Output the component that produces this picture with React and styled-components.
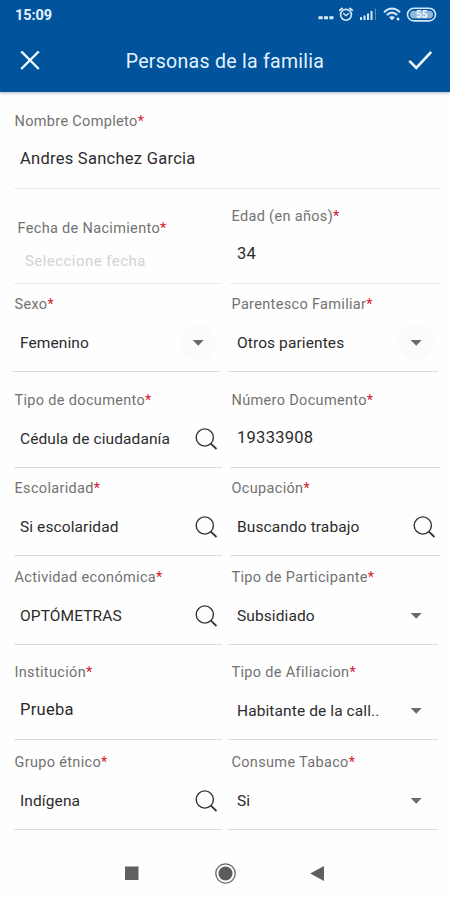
import React from 'react';
import styled, { createGlobalStyle } from 'styled-components';

const GlobalStyle = createGlobalStyle`
  * {
    box-sizing: border-box;
  }

  body {
    margin: 0;
    background-color: #fefefe;
    font-family: Roboto, 'Liberation Sans', sans-serif;
  }
`;

const Screen = styled.div`
  display: flex;
  flex-direction: column;
  width: 450px;
  height: 900px;
  overflow: hidden;
`;

const Header = styled.header`
  height: 92px;
  flex-shrink: 0;
  background-color: #01549c;
  color: #e4f3ff;
  box-shadow: 0 1px 3px rgba(0, 50, 100, 0.35);
`;

const StatusBar = styled.div`
  display: flex;
  align-items: center;
  justify-content: space-between;
  height: 30px;
  padding: 0 13px 0 15px;
`;

const Clock = styled.span`
  font-size: 14.5px;
  font-weight: 700;
  letter-spacing: -0.1px;
`;

const StatusIcons = styled.svg`
  display: block;
  width: 120px;
  height: 30px;
`;

const TitleBar = styled.div`
  display: grid;
  grid-template-columns: 60px 1fr 60px;
  align-items: center;
  height: 62px;
`;

const Title = styled.h1`
  margin: 0;
  text-align: center;
  font-size: 19.5px;
  font-weight: 400;
  letter-spacing: 0.28px;
  white-space: nowrap;
`;

const HeaderButton = styled.button`
  display: flex;
  align-items: center;
  justify-content: center;
  height: 62px;
  padding: 0;
  border: none;
  background: none;
`;

const Form = styled.form`
  padding: 1px 10px 0 14px;
`;

const Row = styled.div`
  display: grid;
  grid-template-columns: ${({ $wide }) => ($wide ? '1fr' : '208px 210px')};
  column-gap: 8px;
  height: ${({ $height }) => $height}px;
`;

const Field = styled.div`
  display: flex;
  flex-direction: column;
  justify-content: flex-end;
  min-width: 0;
  margin-left: ${({ $select }) => ($select ? '-2px' : '0')};
  margin-right: ${({ $select }) => ($select ? '2px' : '0')};
  padding-left: ${({ $select }) => ($select ? '2px' : '0')};
  border-bottom: 1px solid ${({ $faint }) => ($faint ? '#ececec' : '#dcdcdc')};

  & + & {
    text-indent: 1px;
  }
`;

const Label = styled.label`
  height: 20px;
  padding-left: ${({ $date }) => ($date ? '3.5px' : '0.5px')};
  color: #727272;
  font-size: 14.5px;
  line-height: 20px;
  letter-spacing: 0.33px;
  white-space: nowrap;
`;

const Required = styled.span`
  color: #d9182d;
`;

const ValueRow = styled.div`
  display: flex;
  align-items: center;
  justify-content: space-between;
  height: ${({ $type }) => ($type === 'date' ? '44px' : '56px')};
  padding-left: ${({ $type }) => ($type === 'date' ? '11px' : '6px')};
  padding-bottom: ${({ $type }) => ($type === 'input' ? '2px' : '0')};
`;

const Value = styled.span`
  color: #2c2c2c;
  font-size: 15.5px;
  line-height: 22px;
  letter-spacing: 0.1px;
  white-space: nowrap;
`;

const InputValue = styled(Value)`
  font-size: 16.5px;
  letter-spacing: 0.27px;
`;

const Placeholder = styled(Value)`
  color: #d2d2d2;
  font-size: 15px;
  letter-spacing: 0.45px;
`;

const SearchIcon = styled.svg`
  display: block;
  flex-shrink: 0;
  width: 24px;
  height: 24px;
  margin-right: 4px;
`;

const Arrow = styled.span`
  display: flex;
  align-items: center;
  justify-content: center;
  width: 36px;
  height: 36px;
  margin-right: 4px;
  border-radius: 50%;
  background-color: ${({ $halo }) => ($halo ? '#fbfbfb' : 'transparent')};
`;

const NavBar = styled.nav`
  display: flex;
  align-items: center;
  justify-content: center;
  gap: 70px;
  height: 48px;
  margin-top: 19px;

  svg {
    display: block;
    width: 24px;
    height: 24px;
  }
`;

const rows = [
  {
    height: 96,
    fields: [{ label: 'Nombre Completo', value: 'Andres Sanchez Garcia', faint: true }],
  },
  {
    height: 95,
    fields: [
      { label: 'Fecha de Nacimiento', value: 'Seleccione fecha', type: 'date', faint: true },
      { label: 'Edad (en años)', value: '34', faint: true },
    ],
  },
  {
    height: 88,
    fields: [
      { label: 'Sexo', value: 'Femenino', type: 'select', halo: true },
      { label: 'Parentesco Familiar', value: 'Otros parientes', type: 'select', halo: true },
    ],
  },
  {
    height: 96,
    fields: [
      { label: 'Tipo de documento', value: 'Cédula de ciudadanía', type: 'search' },
      { label: 'Número Documento', value: '19333908' },
    ],
  },
  {
    height: 88,
    fields: [
      { label: 'Escolaridad', value: 'Si escolaridad', type: 'search' },
      { label: 'Ocupación', value: 'Buscando trabajo', type: 'search' },
    ],
  },
  {
    height: 89,
    fields: [
      { label: 'Actividad económica', value: 'OPTÓMETRAS', type: 'search' },
      { label: 'Tipo de Participante', value: 'Subsidiado', type: 'select' },
    ],
  },
  {
    height: 95,
    fields: [
      { label: 'Institución', value: 'Prueba' },
      { label: 'Tipo de Afiliacion', value: 'Habitante de la call..', type: 'select' },
    ],
  },
  {
    height: 90,
    fields: [
      { label: 'Grupo étnico', value: 'Indígena', type: 'search' },
      { label: 'Consume Tabaco', value: 'Si', type: 'select' },
    ],
  },
];

const valueStyles = {
  input: InputValue,
  date: Placeholder,
  search: Value,
  select: Value,
};

const FormField = ({ label, value, type = 'input', faint, halo }) => {
  const Text = valueStyles[type];

  return (
    <Field $select={type === 'select'} $faint={faint}>
      <Label $date={type === 'date'}>
        {label}
        <Required>*</Required>
      </Label>
      <ValueRow $type={type}>
        <Text>{value}</Text>
        {type === 'search' && (
          <SearchIcon viewBox="0 0 24 24" fill="none" stroke="#333" strokeWidth="1.4">
            <circle cx="10.8" cy="10.5" r="8.6" />
            <path d="M16.8 16.6 L22.5 22" strokeWidth="1.8" />
          </SearchIcon>
        )}
        {type === 'select' && (
          <Arrow $halo={halo}>
            <svg width="12" height="6" viewBox="0 0 12 6">
              <path d="M0.7 0 H11.7 L6.2 5.7 Z" fill="#6b6b6b" />
            </svg>
          </Arrow>
        )}
      </ValueRow>
    </Field>
  );
};

const StatusGlyphs = () => (
  <StatusIcons viewBox="0 0 120 30" fill="none" stroke="#d3e8f8">
    {/* more notifications */}
    <path d="M1.5 17.8 H5.7 M7 17.8 H11 M12.3 17.8 H16.5" strokeWidth="3" />
    {/* alarm */}
    <circle cx="29" cy="14.8" r="5.4" strokeWidth="1.6" />
    <path d="M26.2 13.3 L29 15.6 L32 13.3" strokeWidth="1.4" />
    <path d="M22.3 10.7 L25.6 8 M35.7 10.7 L32.4 8" strokeWidth="1.8" />
    {/* signal */}
    <path d="M44 17 V20 M47.5 15.5 V20 M51 13.5 V20 M54.5 11 V20" strokeWidth="2" />
    <path d="M58.5 8.5 V20" strokeWidth="1" opacity="0.4" />
    {/* wifi */}
    <path d="M67 12.2 Q75 4.8 83 12.2" strokeWidth="2" />
    <path d="M69.8 15 Q75 10.2 80.2 15" strokeWidth="2" />
    <path d="M72.3 17.4 Q75 15 77.7 17.4 L75 20 Z" fill="#d3e8f8" strokeWidth="0.5" />
    <circle cx="81" cy="19" r="1.5" fill="#d3e8f8" stroke="none" />
    {/* battery */}
    <rect x="90.5" y="8.3" width="28" height="12.6" rx="6.3" strokeWidth="1.6" />
    <rect x="93" y="10.7" width="23" height="7.8" rx="3.9" fill="#8fb9dc" stroke="none" />
    <text x="104.7" y="18.3" textAnchor="middle" fontSize="10" fontWeight="700" fill="#f4fbff" stroke="none">
      55
    </text>
  </StatusIcons>
);

const App = () => (
  <Screen>
    <GlobalStyle />
    <Header>
      <StatusBar>
        <Clock>15:09</Clock>
        <StatusGlyphs />
      </StatusBar>
      <TitleBar>
        <HeaderButton type="button" aria-label="Cerrar">
          <svg width="20" height="20" viewBox="0 0 20 20" stroke="#f0f9ff" strokeWidth="2.4">
            <path d="M1.2 0.4 L18.8 18 M18.8 0.4 L1.2 18" />
          </svg>
        </HeaderButton>
        <Title>Personas de la familia</Title>
        <HeaderButton type="button" aria-label="Guardar">
          <svg width="24" height="20" viewBox="0 0 24 20" fill="none" stroke="#f0f9ff" strokeWidth="2.6">
            <path d="M1.3 9.8 L8.3 16.8 L23.2 1" />
          </svg>
        </HeaderButton>
      </TitleBar>
    </Header>
    <Form>
      {rows.map(({ height, fields }) => (
        <Row key={fields[0].label} $height={height} $wide={fields.length === 1}>
          {fields.map((field) => (
            <FormField key={field.label} {...field} />
          ))}
        </Row>
      ))}
    </Form>
    <NavBar>
      <svg viewBox="0 0 24 24">
        <rect x="6" y="5.5" width="13.5" height="13.5" fill="#606060" />
      </svg>
      <svg viewBox="0 0 24 24">
        <circle cx="12.5" cy="12.5" r="9.7" fill="none" stroke="#666" strokeWidth="1.3" />
        <circle cx="12.5" cy="12.5" r="7" fill="#5c5c5c" />
      </svg>
      <svg viewBox="0 0 24 24">
        <path d="M17 5 V20 L3.2 12.5 Z" fill="#606060" />
      </svg>
    </NavBar>
  </Screen>
);

export default App;
